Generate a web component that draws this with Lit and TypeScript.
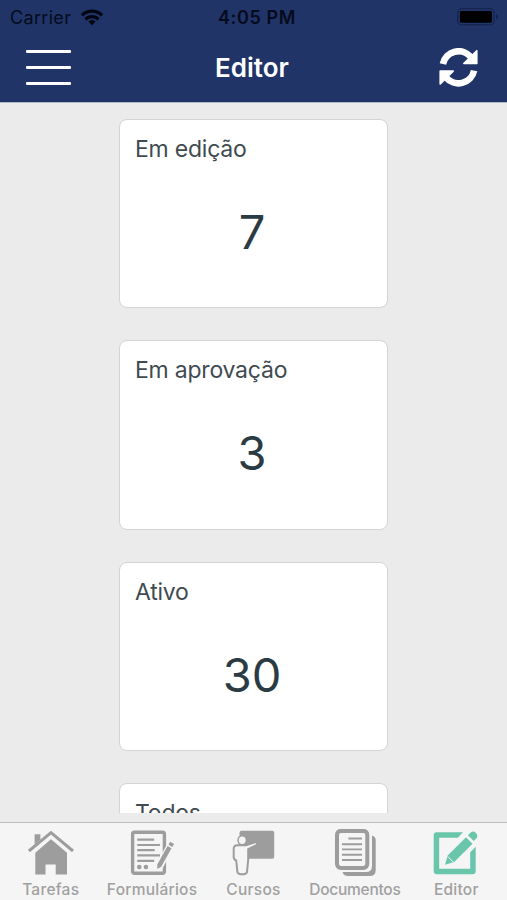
import { LitElement, html, svg, css } from "lit";
import { customElement, property } from "lit/decorators.js";
import { classMap } from "lit/directives/class-map.js";

const wifi = svg`<svg viewBox="0 0 24 17" width="24" height="17">
  <g fill="none" stroke="#020611" stroke-width="3.1">
    <path d="M1.9 6.3a14.3 14.3 0 0 1 20.2 0"/>
    <path d="M5.5 10.3a9.2 9.2 0 0 1 13 0"/>
  </g>
  <path d="M8.3 12.6a5.2 5.2 0 0 1 7.4 0L12 16.3z" fill="#020611"/>
</svg>`;

const battery = svg`<svg viewBox="0 0 42 18" width="42" height="18">
  <rect x=".7" y=".7" width="36.3" height="16" rx="3.8" fill="none" stroke="#13204a" stroke-width="1.1"/>
  <rect x="2.9" y="2.9" width="32" height="11.8" rx="1.4" fill="#000"/>
  <path d="M39 6v5.4q2-1 2-2.7T39 6z" fill="#13204a"/>
</svg>`;

const refresh = svg`<svg viewBox="0 0 39 39" width="39" height="39">
  <path d="M3.900 16A16 16 0 0 1 32 9.200" fill="none" stroke="#fff" stroke-width="6.600"/>
  <path d="M37.800 2.700v12.800H24.800z" fill="#fff" stroke="#fff" stroke-width="1.600" stroke-linejoin="round"/>
  <path d="M35.100 22.600A16 16 0 0 1 7 29.400" fill="none" stroke="#fff" stroke-width="6.600"/>
  <path d="M1.200 35.900V23.100h13z" fill="#fff" stroke="#fff" stroke-width="1.600" stroke-linejoin="round"/>
</svg>`;

const home = svg`<svg viewBox="0 0 48 48">
  <path d="M7.600 5.200h5.800v5.200l-5.800 5z" fill="#9d9d9d"/>
  <path d="M1.900 22 24 3.600 46 22" fill="none" stroke="#9d9d9d" stroke-width="3"/>
  <path d="M8.300 23.800 24 10.300l16 13.500v21.700H28.700V35.400H18.500v10.100H8.300z" fill="#9d9d9d"/>
</svg>`;

const form = svg`<svg viewBox="0 0 48 48">
  <rect x="4.600" y="3.300" width="31.800" height="41" rx="2" fill="none" stroke="#9d9d9d" stroke-width="3.400"/>
  <path d="M9.200 10.700h17M9.200 16H32M9.200 21.100h17.500M9.200 26.400H32M9.200 31.800h17" stroke="#9d9d9d" stroke-width="2.200"/>
  <circle cx="11.300" cy="38" r="2.300" fill="#9d9d9d"/><circle cx="17.900" cy="38" r="2.300" fill="#9d9d9d"/>
  <path d="M31 38 44.500 13" stroke="#f5f5f5" stroke-width="7.500"/>
  <path d="M29.300 40v-4.500L39.600 17l3.900 2.300L33.200 37.700z" fill="#9d9d9d"/>
  <path d="m40.500 15.700 1.700-3 3.900 2.200-1.700 3z" fill="#9d9d9d"/>
</svg>`;

const teacher = svg`<svg viewBox="0 0 48 48">
  <rect x="10.500" y="1.700" width="34.700" height="28" rx="2" fill="#9d9d9d"/>
  <path d="M8.200 16.300h9l8.800-3q1.900-.3 2.200 1.100.2 1.300-1.300 2l-7.700 3.700v10.500L18 43q-.4 2.300-4.800 2.300T8.400 43L7.200 31.500q-2.500-.8-2.500-3.500v-8q0-3.700 3.500-3.700z" fill="#f5f5f5" stroke="#9d9d9d" stroke-width="2"/>
  <ellipse cx="13.200" cy="11.300" rx="4.200" ry="4.500" fill="#f5f5f5" stroke="#9d9d9d" stroke-width="1.500"/>
</svg>`;

const docs = svg`<svg viewBox="0 0 48 48">
  <path d="M41 6.500q3.700 1 3.700 4.500v30q0 6-6 6H17q-4.500 0-5.500-4H35q6 0 6-6z" fill="#9d9d9d"/>
  <rect x="6" y="1.900" width="30.300" height="37" rx="3.800" fill="#f5f5f5" stroke="#9d9d9d" stroke-width="4"/>
  <path d="M17.400 9.500H31M11 15.200h20M11 20.400h20M11 25.800h20M11 31h20" stroke="#9d9d9d" stroke-width="1.900"/>
</svg>`;

const edit = svg`<svg viewBox="0 0 48 48">
  <path d="M31 3.300 25.800 8.800H7.200v31h31V23.300l5.500-5.600v24.600q0 3-3 3h-36q-3 0-3-3v-36q0-3 3-3z" fill="#69c6aa"/>
  <path d="m13 35.800 2.700-9.200L34 8.300l6.500 6.500-18.300 18.300z" fill="#69c6aa"/>
  <path d="m15.600 27.300 5.800 5.800" stroke="#f5f5f5" stroke-width="1"/>
  <path d="m35.900 6.300 2.500-2.600q2.800-2.400 5.500.2t.4 5.600l-2.500 2.600z" fill="#69c6aa"/>
</svg>`;

@customElement("count-card")
export class CountCard extends LitElement {
  @property() label = "";
  @property() value = "";

  static styles = css`
    :host {
      display: flex;
      flex-direction: column;
      flex: none;
      box-sizing: border-box;
      width: 269px;
      height: 189.500px;
      padding: 14px 15px;
      border: 1.500px solid #d4d4d4;
      border-radius: 8px;
      background: #fff;
      color: #2b3b43;
    }
    .label {
      font-size: 23px;
      line-height: 30px;
      letter-spacing: -0.220px;
      color: #3f4b50;
    }
    .value {
      text-align: center;
      font-size: 47px;
      line-height: 56px;
      margin: 40px 3px 0 0;
    }
  `;

  render() {
    return html`<div class="label">${this.label}</div><div class="value">${this.value}</div>`;
  }
}

@customElement("app-root")
export class AppRoot extends LitElement {
  static styles = css`
    :host {
      display: flex;
      flex-direction: column;
      width: 507px;
      height: 900px;
      overflow: hidden;
      background: #ebebeb;
      font-family: Inter, "Liberation Sans", sans-serif;
    }
    svg { display: block; }
    .top {
      flex: none;
      height: 103px;
      background: #203468;
      border-bottom: 1px solid #b4b9c6;
      box-sizing: border-box;
    }
    .status {
      display: grid;
      grid-template-columns: 1fr auto 1fr;
      align-items: center;
      height: 34px;
      padding: 0 8px 0 10px;
      color: #050b1c;
      font-size: 18px;
    }
    .carrier { display: flex; align-items: center; gap: 9px; letter-spacing: 0.320px; }
    .time { font-weight: 600; letter-spacing: 0.650px; margin-left: 5px; }
    .battery { justify-self: end; }
    .nav {
      display: grid;
      grid-template-columns: 1fr auto 1fr;
      align-items: center;
      height: 66px;
      padding: 0 29px 0 26px;
    }
    .menu { display: flex; flex-direction: column; gap: 13px; width: 44.500px; }
    .bar { height: 3px; background: #fff; border-radius: 1px; }
    .title { color: #fff; font-size: 26px; font-weight: 600; }
    .refresh { justify-self: end; }
    .list {
      flex: none;
      display: flex;
      flex-direction: column;
      align-items: center;
      gap: 32.100px;
      box-sizing: border-box;
      height: 710px;
      padding-top: 15.500px;
      overflow: hidden;
    }
    .tabs {
      display: grid;
      grid-template-columns: repeat(5, 1fr);
      box-sizing: border-box;
      height: 78px;
      margin-top: 9px;
      padding-top: 6px;
      border-top: 1.500px solid #bdbdbd;
      background: #f5f5f5;
    }
    .tab { display: flex; flex-direction: column; align-items: center; }
    .tab svg { width: 48px; height: 48px; }
    .name {
      margin-top: 2px;
      font-size: 15.500px;
      font-weight: 500;
      line-height: 21px;
      letter-spacing: 0.250px;
      color: #a0a0a0;
      white-space: nowrap;
    }
    .tight { letter-spacing: -0.250px; }
  `;

  private cards = [
    ["Em edição", "7"],
    ["Em aprovação", "3"],
    ["Ativo", "30"],
    ["Todos", ""],
  ];

  private tabs = [
    { name: "Tarefas", icon: home },
    { name: "Formulários", icon: form },
    { name: "Cursos", icon: teacher },
    { name: "Documentos", icon: docs, tight: true },
    { name: "Editor", icon: edit },
  ];

  render() {
    return html`
      <header class="top">
        <div class="status">
          <div class="carrier"><span>Carrier</span>${wifi}</div>
          <div class="time">4:05 PM</div>
          <div class="battery">${battery}</div>
        </div>
        <div class="nav">
          <div class="menu"><div class="bar"></div><div class="bar"></div><div class="bar"></div></div>
          <div class="title">Editor</div>
          <div class="refresh">${refresh}</div>
        </div>
      </header>
      <main class="list">
        ${this.cards.map(([label, value]) => html`<count-card .label=${label} .value=${value}></count-card>`)}
      </main>
      <nav class="tabs">
        ${this.tabs.map(
          (t) => html`<div class="tab">${t.icon}<div class=${classMap({ name: true, tight: !!t.tight })}>${t.name}</div></div>`,
        )}
      </nav>
    `;
  }
}
